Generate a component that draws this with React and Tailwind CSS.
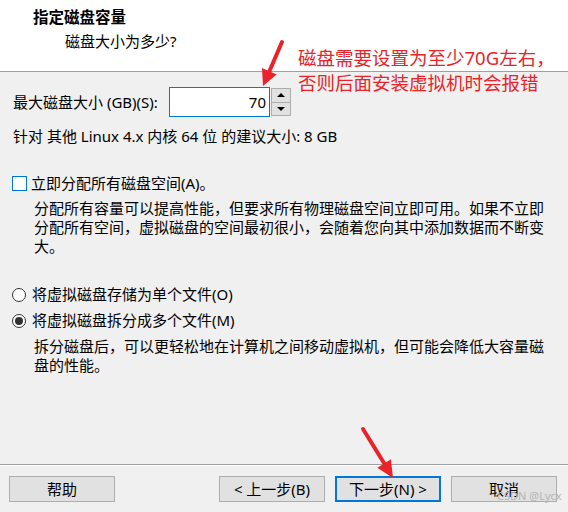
import React from "react";

function WinButton({ children, primary }) {
  return (
    <button
      className={
        primary
          ? "w-[106px] h-[26px] bg-[#e1e1e1] border-2 border-[#0078d7] text-[15px] leading-none text-black"
          : "w-[106px] h-[26px] bg-[#e1e1e1] border border-[#adadad] text-[15px] leading-none text-black"
      }
    >
      {children}
    </button>
  );
}

export default function App() {
  return (
    <div className="relative w-[568px] h-[512px] bg-[#f0f0f0] flex flex-col overflow-hidden text-black font-['Noto_Sans','Noto_Sans_CJK_SC',sans-serif]">
      {/* 标题区域 */}
      <div className="h-[72px] bg-white border-b border-[#a0a0a0]">
        <div className="pl-[33px] pt-[8px] text-[15.5px] leading-[19px] font-bold">指定磁盘容量</div>
        <div className="pl-[65px] pt-[5px] text-[15px] leading-[19px]">磁盘大小为多少?</div>
      </div>

      {/* 磁盘大小 */}
      <div className="flex items-center mt-[15px] pl-[13px] h-[30px]">
        <span className="text-[15px] leading-[19px] w-[156px]">最大磁盘大小 (GB)(S):</span>
        <div className="w-[101px] h-[30px] bg-white border border-[#0078d7] flex items-center justify-end pr-[3px] text-[15px]">
          70
        </div>
        <div className="ml-px w-[20px] h-[28px] flex flex-col border border-[#adadad] bg-[#e1e1e1]">
          <div className="flex-1 flex items-center justify-center border-b border-[#adadad]">
            <div className="w-0 h-0 border-l-[4px] border-r-[4px] border-b-[4px] border-l-transparent border-r-transparent border-b-black" />
          </div>
          <div className="flex-1 flex items-center justify-center">
            <div className="w-0 h-0 border-l-[4px] border-r-[4px] border-t-[4px] border-l-transparent border-r-transparent border-t-black" />
          </div>
        </div>
      </div>

      <div className="mt-[10px] pl-[13px] text-[15px] leading-[19px]">
        针对 其他 Linux 4.x 内核 64 位 的建议大小: 8 GB
      </div>

      {/* 立即分配 */}
      <div className="mt-[28px] pl-[12px] flex items-center h-[19px]">
        <div className="w-[15px] h-[15px] bg-white border border-[#0078d7]" />
        <span className="ml-[4px] text-[15px] leading-[19px]">立即分配所有磁盘空间(A)。</span>
      </div>
      <p className="mt-[6px] ml-[34px] w-[516px] text-[15px] leading-[19px]">
        分配所有容量可以提高性能，但要求所有物理磁盘空间立即可用。如果不立即分配所有空间，虚拟磁盘的空间最初很小，会随着您向其中添加数据而不断变大。
      </p>

      {/* 存储方式 */}
      <div className="mt-[29px] pl-[12px] flex items-center h-[19px]">
        <div className="w-[14px] h-[14px] rounded-full bg-white border border-[#333]" />
        <span className="ml-[6px] text-[15px] leading-[19px]">将虚拟磁盘存储为单个文件(O)</span>
      </div>
      <div className="mt-[7px] pl-[12px] flex items-center h-[19px]">
        <div className="w-[14px] h-[14px] rounded-full bg-white border border-[#333] flex items-center justify-center">
          <div className="w-[8px] h-[8px] rounded-full bg-[#333]" />
        </div>
        <span className="ml-[6px] text-[15px] leading-[19px]">将虚拟磁盘拆分成多个文件(M)</span>
      </div>
      <p className="mt-[7px] ml-[34px] w-[516px] text-[15px] leading-[19px]">
        拆分磁盘后，可以更轻松地在计算机之间移动虚拟机，但可能会降低大容量磁盘的性能。
      </p>

      <div className="flex-1" />

      {/* 底部按钮 */}
      <div className="border-t border-[#a0a0a0]">
        <div className="border-t border-white h-[47px] pt-[10px] pl-[9px] pr-[11px] flex items-start">
          <WinButton>帮助</WinButton>
          <div className="ml-auto flex gap-[10px]">
            <WinButton>&lt; 上一步(B)</WinButton>
            <WinButton primary>下一步(N) &gt;</WinButton>
            <WinButton>取消</WinButton>
          </div>
        </div>
      </div>

      {/* 红色标注 */}
      <div className="absolute left-[298px] top-[45px] text-[18.5px] leading-[25px] text-[#e8232a]">
        <div>磁盘需要设置为至少70G左右，</div>
        <div>否则后面安装虚拟机时会报错</div>
      </div>
      <svg className="absolute inset-0 pointer-events-none" width="568" height="512">
        <line x1="282" y1="42" x2="269.5" y2="71" stroke="#e8232a" strokeWidth="4" strokeLinecap="round" />
        <polygon points="263,86 276.6,74.5 262,68.1" fill="#e8232a" />
        <line x1="363" y1="429" x2="384" y2="463" stroke="#e8232a" strokeWidth="4" strokeLinecap="round" />
        <polygon points="393,478 390.9,459.3 377.3,467.7" fill="#e8232a" />
      </svg>
      <div className="absolute left-[497px] top-[488px] text-[11px] text-[#b4b4b4]">CSDN @Lycx</div>
    </div>
  );
}
